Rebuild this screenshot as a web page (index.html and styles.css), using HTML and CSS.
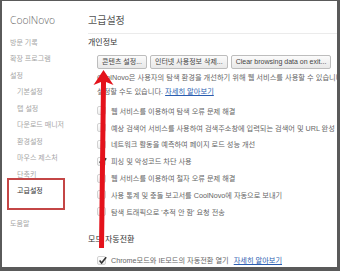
FILE: index.html
```html
<!DOCTYPE html>
<html lang="ko">
<head>
    <meta charset="UTF-8">
    <meta name="viewport" content="width=device-width, initial-scale=1.0">
    <title>고급설정 - CoolNovo</title>
    <link rel="stylesheet" href="styles.css">
</head>
<body>

    <div class="window">
        <aside class="sidebar">
            <div class="brand">CoolNovo</div>
            <ul class="nav">
                <li>방문 기록</li>
                <li>확장 프로그램</li>
                <li>설정</li>
                <li class="sub">기본설정</li>
                <li class="sub">탭 설정</li>
                <li class="sub">다운로드 매니저</li>
                <li class="sub">환경설정</li>
                <li class="sub">마우스 제스처</li>
                <li class="sub">단축키</li>
                <li class="sub active">고급설정</li>
                <li class="help">도움말</li>
            </ul>
        </aside>

        <main class="main">
            <h1 class="page-title">고급설정</h1>

            <section class="section">
                <h2 class="section-title">개인정보</h2>
                <div class="section-body">
                    <div class="buttons">
                        <button class="button">콘텐츠 설정...</button>
                        <button class="button">인터넷 사용정보 삭제...</button>
                        <button class="button">Clear browsing data on exit...</button>
                    </div>
                    <p class="note first">CoolNovo은 사용자의 탐색 환경을 개선하기 위해 웹 서비스를 사용할 수 있습니다. 원하는 경우 이러한 서비스를 사용 중지하도록</p>
                    <p class="note">설정할 수도 있습니다. <a href="#" class="link">자세히 알아보기</a></p>

                    <ul class="checks">
                        <li><span class="box"></span>웹 서비스를 이용하여 탐색 오류 문제 해결</li>
                        <li><span class="box"></span>예상 검색어 서비스를 사용하여 검색주소창에 입력되는 검색어 및 URL 완성</li>
                        <li><span class="box"></span>네트워크 활동을 예측하여 페이지 로드 성능 개선</li>
                        <li><span class="box checked"><svg viewBox="0 0 9 9"><path d="M1.6 4.6 L3.6 7 L8.2 1.2"/></svg></span>피싱 및 악성코드 차단 사용</li>
                        <li><span class="box"></span>웹 서비스를 이용하여 철자 오류 문제 해결</li>
                        <li><span class="box"></span>사용 통계 및 충돌 보고서를 CoolNovo에 자동으로 보내기</li>
                        <li><span class="box"></span>탐색 트래픽으로 '추적 안 함' 요청 전송</li>
                    </ul>
                </div>
            </section>

            <section class="section">
                <h2 class="section-title mode">모드 자동전환</h2>
                <div class="section-body">
                    <ul class="checks single">
                        <li><span class="box checked"><svg viewBox="0 0 9 9"><path d="M1.6 4.6 L3.6 7 L8.2 1.2"/></svg></span>Chrome모드와 IE모드의 자동전환 열기 <a href="#" class="link">자세히 알아보기</a></li>
                    </ul>
                </div>
            </section>
        </main>

        <!-- red annotation arrow drawn over the page -->
        <svg class="arrow" viewBox="0 0 340 271">
            <polygon points="103.5,70 93.5,85 101,82 99,248 104,248 106,82 113.5,85"/>
        </svg>
    </div>

</body>
</html>
```

FILE: styles.css
```css
* {
    box-sizing: border-box;
}

html, body {
    margin: 0;
    padding: 0;
}

body {
    background: #fff;
    font-family: "Liberation Sans", "Noto Sans CJK KR", sans-serif;
    color: #666;
}

.window {
    position: relative;
    display: flex;
    width: 340px;
    height: 271px;
    border-style: solid;
    border-color: #5a5a5a;
    border-width: 1px 3px 4px 2px;
    background: #fff;
    overflow: hidden;
}

/* sidebar */

.sidebar {
    flex: none;
    width: 86px;
    padding: 11px 0 0 8px;
}

.brand {
    font-family: "Open Sans", sans-serif;
    font-weight: 300;
    font-size: 10.3px;
    line-height: 16px;
    color: #666;
    margin-bottom: 6.75px;
}

.nav {
    list-style: none;
    margin: 0;
    padding: 0;
    font-size: 7px;
    line-height: 16.5px;
    color: #a6a6a6;
    white-space: nowrap;
}

.nav .sub {
    padding-left: 7px;
}

.nav .active {
    position: relative;
    color: #333;
}

.nav .active::after {
    content: "";
    position: absolute;
    left: -3px;
    top: -5px;
    width: 54px;
    height: 28px;
    border: 2px solid #c44646;
}

.nav .help {
    margin-top: 16.5px;
}

/* main */

.main {
    flex: 1;
    min-width: 0;
    padding-top: 12px;
    white-space: nowrap;
}

.page-title {
    margin: 0;
    padding-bottom: 4px;
    border-bottom: 1px solid #ebebeb;
    font-size: 10px;
    font-weight: normal;
    line-height: 16px;
    color: #555;
}

.section-title {
    margin: 3px 0 0;
    font-size: 8px;
    font-weight: normal;
    line-height: 12px;
    color: #333;
}

.section-title.mode {
    margin-top: 13px;
    line-height: 14px;
}

.section-body {
    padding-left: 9px;
}

.buttons {
    display: flex;
    gap: 3px;
    margin-top: 6px;
}

.button {
    flex: none;
    height: 14px;
    padding: 0 4px;
    border: 1px solid #bdbdbd;
    border-radius: 2px;
    background: linear-gradient(#fbfbfb, #e8e8e8);
    font: 7px/12px "Liberation Sans", "Noto Sans CJK KR", sans-serif;
    color: #444;
}

.note {
    margin: 0;
    font-size: 7.25px;
    line-height: 14px;
}

.note.first {
    margin-top: 2px;
}

.link {
    color: #2a5db0;
    text-decoration: underline;
}

.checks {
    list-style: none;
    margin: 3.5px 0 0;
    padding: 0;
    font-size: 7.2px;
}

.checks.single {
    margin-top: 4.6px;
}

.checks li {
    display: flex;
    align-items: center;
    gap: 5px;
    height: 16.8px;
}

.box {
    flex: none;
    width: 9px;
    height: 9px;
    border: 1px solid #d2d2d2;
    border-radius: 2px;
    background: linear-gradient(#fff, #ededed);
}

.box svg {
    display: block;
    width: 9px;
    height: 9px;
    margin: -1px 0 0 0;
}

.box svg path {
    fill: none;
    stroke: #333;
    stroke-width: 1.6;
}

.arrow {
    position: absolute;
    left: -2px;
    top: -1px;
    width: 340px;
    height: 271px;
    pointer-events: none;
}

.arrow polygon {
    fill: #e4121b;
}
```
